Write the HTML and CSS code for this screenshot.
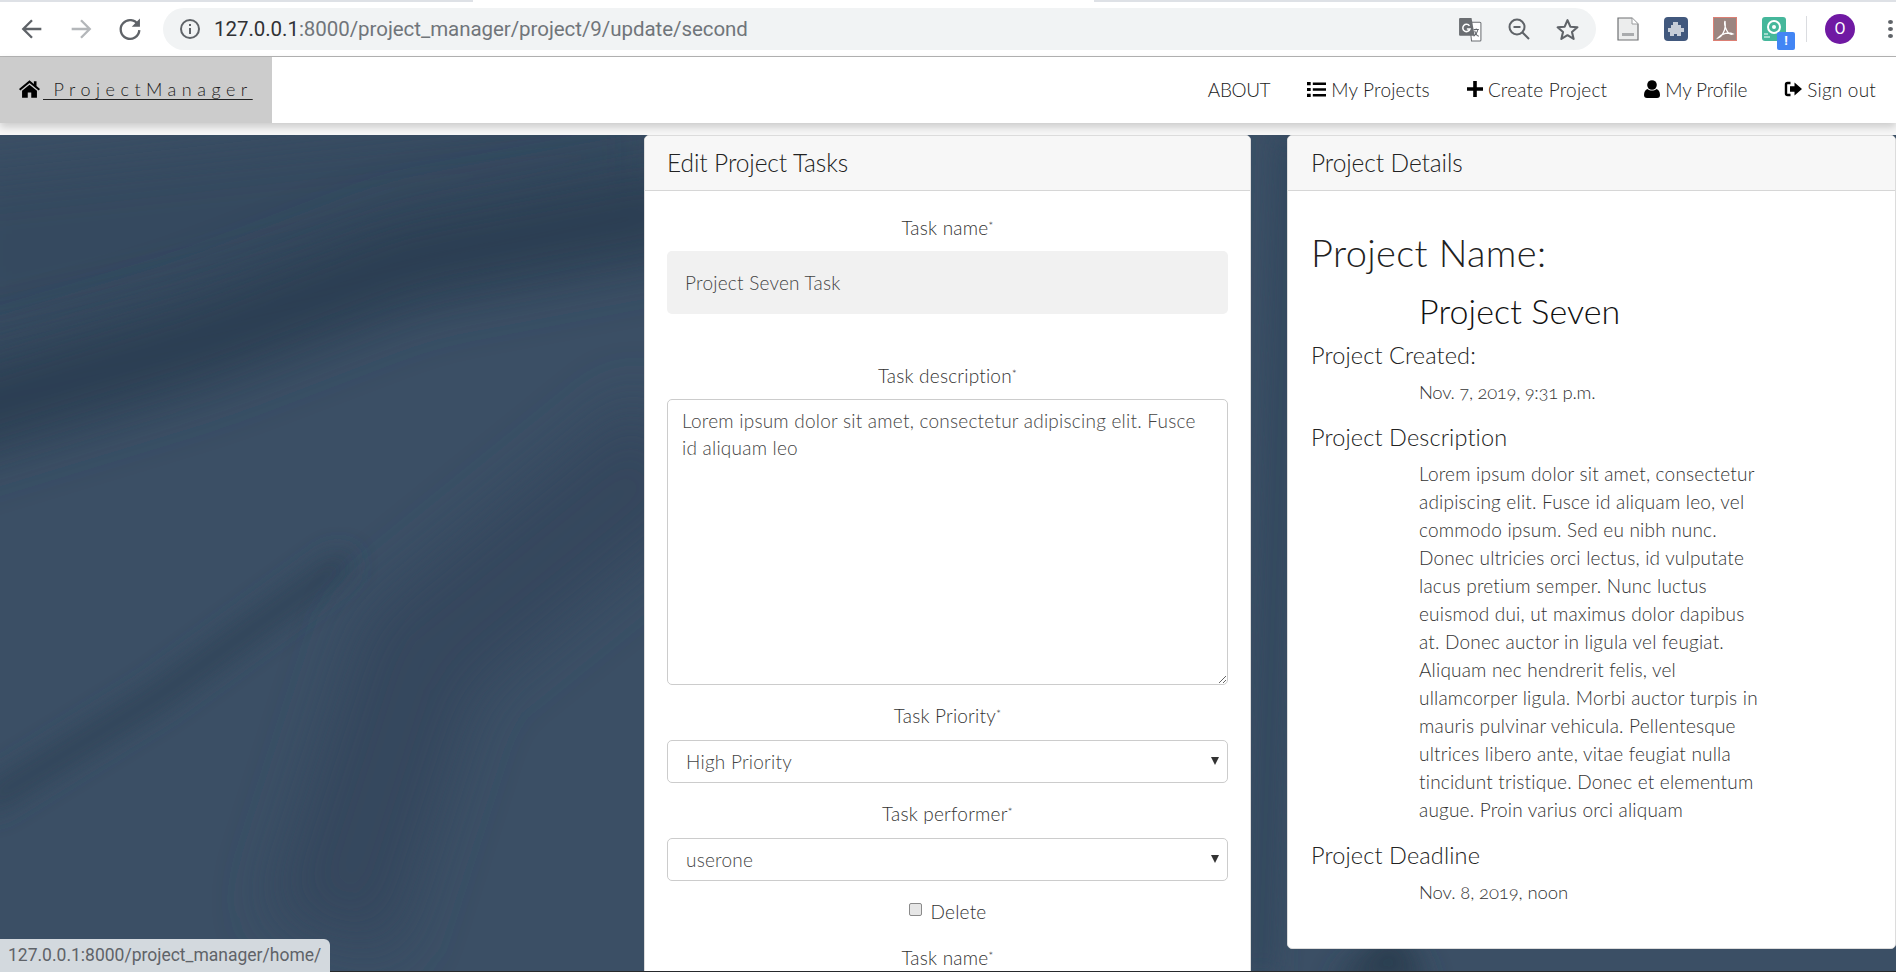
FILE: index.html
```html
<!DOCTYPE html>
<html lang="en">
<head>
<meta charset="utf-8">
<title>ProjectManager</title>
<link rel="stylesheet" href="styles.css">
</head>
<body>
<div class="tabstrip"><span class="tabstrip-open"></span></div>
<header class="chrome">
  <svg class="ci back" viewBox="0 0 24 24" width="28" height="28"><path d="M20 12H5M12 4.500 4.500 12 12 19.500" fill="none" stroke="#5f6368" stroke-width="2"/></svg>
  <svg class="ci fwd" viewBox="0 0 24 24" width="28" height="28"><path d="M4 12h15M12 4.500 19.500 12 12 19.500" fill="none" stroke="#b4b7ba" stroke-width="2"/></svg>
  <svg class="ci reload" viewBox="0 0 24 24" width="28" height="28"><path d="M19 8.500A8 8 0 1 0 20 13" fill="none" stroke="#5f6368" stroke-width="2"/><path d="M20.500 3v7h-7z" fill="#5f6368"/></svg>
  <div class="omnibox">
    <svg viewBox="0 0 24 24" width="24" height="24"><circle cx="12" cy="12" r="9" fill="none" stroke="#5f6368" stroke-width="2"/><path d="M12 11v6M12 7v2" stroke="#5f6368" stroke-width="2"/></svg>
    <span class="url"><span class="url-host">127.0.0.1</span>:8000/project_manager/project/9/update/second</span>
    <span class="omni-tools">
      <svg viewBox="0 0 24 24" width="25" height="25"><path d="M11 5h10a1 1 0 0 1 1 1v16a1 1 0 0 1-1 1h-8l-2-18z" fill="#fff" stroke="#6b6e72"/><path d="M2 1h11l3 17H2a1 1 0 0 1-1-1V2a1 1 0 0 1 1-1z" fill="#6b6e72"/><path d="M11 8.500a3.500 3.500 0 1 0 .5 3H8.500" fill="none" stroke="#fff" stroke-width="1.500"/><path d="M15 12h5M17.500 11v1.500M19 12.500c-.7 3-2.500 5-4 6M16 13c.7 3 2.500 5 4 5.500" fill="none" stroke="#5f6368"/></svg>
      <svg viewBox="0 0 24 24" width="24" height="24"><circle cx="10" cy="10" r="7.500" fill="none" stroke="#5f6368" stroke-width="2"/><path d="M15.500 15.500 22 22M6.500 10h7" stroke="#5f6368" stroke-width="2"/></svg>
      <svg viewBox="0 0 24 24" width="25" height="25"><path d="m12 3 2.700 6.300 6.800.6-5.200 4.500 1.600 6.700L12 17.500l-5.900 3.600 1.600-6.700L2.500 9.900l6.800-.6z" fill="none" stroke="#5f6368" stroke-width="2" stroke-linejoin="round"/></svg>
    </span>
  </div>
  <div class="extensions">
    <svg viewBox="0 0 22 24" width="22" height="24"><path d="M1 1h14l6 6v16H1z" fill="#eceded" stroke="#6f7173" stroke-width="1.200"/><path d="M15 1v6h6" fill="#fff" stroke="#9a9c9e"/><rect x="5" y="16" width="12" height="3" fill="#a9abad"/></svg>
    <svg viewBox="0 0 24 24" width="24" height="24"><rect width="24" height="24" rx="4" fill="#41587d"/><path d="M9 5h5v3h3v3h3v4h-3v4h-4v-2h-3v2H6v-4H4v-4h3V8h2z" fill="#c6cdd8"/></svg>
    <svg viewBox="0 0 24 24" width="24" height="24"><rect x=".5" y=".5" width="23" height="23" fill="#9b8580" stroke="#dc7f74"/><path d="M12 4c-1 3 0 6 1.500 9S17 18 20 17c-4-2-11-1-15 4 3-1 5-4 6.500-8 .7-2 1-6 .5-9z" fill="none" stroke="#fff" stroke-width="1.300"/></svg>
    <span class="ext-badge-wrap">
      <svg viewBox="0 0 24 24" width="24" height="24"><rect width="24" height="24" rx="3" fill="#45b79b"/><circle cx="12" cy="10" r="6" fill="none" stroke="#fff" stroke-width="2"/><circle cx="12" cy="10" r="2" fill="#fff"/><path d="M2 20h6M2 17h4" stroke="#fff"/></svg>
      <span class="ext-badge">!</span>
    </span>
    <span class="sep"></span>
    <span class="avatar">O</span>
    <span class="dots"><i></i><i></i><i></i></span>
  </div>
</header>

<nav class="navbar">
  <a class="brand">
    <svg class="brand-icon" viewBox="0 0 24 20" width="21" height="18"><path d="M12 0 0 10l1.500 1.800L12 3.200l10.500 8.600L24 10l-4-3.300V1h-3v3.200z" fill="#000"/><path d="M12 5 3.500 12v8H10v-6h4v6h6.500v-8z" fill="#000"/></svg><span class="brand-text"> ProjectManager</span>
  </a>
  <ul class="nav-links">
    <li class="nav-about">ABOUT</li>
    <li><svg viewBox="0 0 18 16" width="19" height="17"><path d="M0 1h3.500v3H0zM0 6.500h3.500v3H0zM0 12h3.500v3H0zM5.500 1.300H18v2.400H5.500zM5.500 6.800H18v2.400H5.500zM5.500 12.300H18v2.400H5.500z" fill="#000"/></svg>My Projects</li>
    <li><svg viewBox="0 0 16 16" width="16" height="16"><path d="M6.200 0h3.600v6.200H16v3.600H9.800V16H6.200V9.800H0V6.200h6.200z" fill="#000"/></svg>Create Project</li>
    <li class="nav-profile"><svg viewBox="0 0 16 18" width="16" height="18"><circle cx="8" cy="5" r="4.800" fill="#000"/><path d="M3.500 9c2.500 2 6.500 2 9 0 2 .7 3.500 2.700 3.500 6 0 2-1 3-3 3H3c-2 0-3-1-3-3 0-3.300 1.500-5.300 3.500-6z" fill="#000"/></svg>My Profile</li>
    <li><svg viewBox="0 0 18 16" width="18" height="16"><path d="M6.500 2H3.500C2.500 2 2 2.500 2 3.500v9c0 1 .5 1.500 1.500 1.500h3" fill="none" stroke="#000" stroke-width="2.400"/><path d="M10.500 1.500 18 8l-7.500 6.500V10.700H6V5.300h4.500z" fill="#000"/></svg>Sign out</li>
  </ul>
</nav>
<div class="nav-gap"></div>

<main class="page">
  <svg class="backdrop" viewBox="0 0 1896 837" width="1896" height="837" aria-hidden="true">
    <defs>
      <filter id="soft" filterUnits="userSpaceOnUse" x="-300" y="-300" width="2500" height="1500"><feGaussianBlur stdDeviation="30"/></filter>
      <filter id="softer" filterUnits="userSpaceOnUse" x="-300" y="-300" width="2500" height="1500"><feGaussianBlur stdDeviation="14"/></filter>
    </defs>
    <path d="M-60 40 L660 -40 L660 60 L-60 220z" fill="#35495e" filter="url(#soft)"/>
    <path d="M-80 290 L200 205 L410 125 L700 70" fill="none" stroke="#293d51" stroke-width="85" filter="url(#soft)"/>
    <path d="M-10 665 L160 560 L340 430" fill="none" stroke="#2f4357" stroke-width="22" stroke-linecap="round" filter="url(#softer)"/>
    <path d="M330 800 L420 520 L680 310" fill="none" stroke="#34475d" stroke-width="130" filter="url(#soft)"/>
    <path d="M1330 850 L1395 790 L1430 850z" fill="#2a3e50" filter="url(#softer)"/>
    <path d="M1290 0 L1260 840" fill="none" stroke="#33475d" stroke-width="26" filter="url(#softer)"/>
  </svg>
  <section class="card card-tasks">
    <h4 class="card-header">Edit Project Tasks</h4>
    <form class="card-body form">
      <div class="field field-wide">
        <label class="label-tight">Task name<sup>*</sup></label>
        <input class="text-input" type="text" value="Project Seven Task" readonly>
      </div>
      <div class="field">
        <label class="label-tight">Task description<sup>*</sup></label>
        <textarea class="textarea" readonly>Lorem ipsum dolor sit amet, consectetur adipiscing elit. Fusce
id aliquam leo</textarea>
      </div>
      <div class="field">
        <label>Task Priority<sup>*</sup></label>
        <div class="select-wrap"><select class="select"><option>High Priority</option></select></div>
      </div>
      <div class="field">
        <label>Task performer<sup>*</sup></label>
        <div class="select-wrap"><select class="select"><option>userone</option></select></div>
      </div>
      <div class="field field-check">
        <input class="check" type="checkbox" id="del"><label for="del">Delete</label>
      </div>
      <div class="field">
        <label>Task name<sup>*</sup></label>
      </div>
    </form>
  </section>

  <section class="card card-details">
    <h4 class="card-header">Project Details</h4>
    <div class="card-body details">
      <h2 class="d-title">Project Name:</h2>
      <h3 class="d-value-lg">Project Seven</h3>
      <h5 class="d-head">Project Created:</h5>
      <p class="d-text d-date d-date-long">Nov. 7, 2019, 9:31 p.m.</p>
      <h5 class="d-head">Project Description</h5>
      <p class="d-text">Lorem ipsum dolor sit amet, consectetur<br>adipiscing elit. Fusce id aliquam leo, vel<br>commodo ipsum. Sed eu nibh nunc.<br>Donec ultricies orci lectus, id vulputate<br>lacus pretium semper. Nunc luctus<br>euismod dui, ut maximus dolor dapibus<br>at. Donec auctor in ligula vel feugiat.<br>Aliquam nec hendrerit felis, vel<br>ullamcorper ligula. Morbi auctor turpis in<br>mauris pulvinar vehicula. Pellentesque<br>ultrices libero ante, vitae feugiat nulla<br>tincidunt tristique. Donec et elementum<br>augue. Proin varius orci aliquam</p>
      <h5 class="d-head">Project Deadline</h5>
      <p class="d-text d-date">Nov. 8, 2019, noon</p>
    </div>
  </section>
</main>
<div class="status">127.0.0.1:8000/project_manager/home/</div>
</body>
</html>
```
FILE: styles.css
```css
* { box-sizing: border-box; }
html, body { margin: 0; padding: 0; height: 972px; overflow: hidden; background: #fff; }
body { display: flex; flex-direction: column; font-family: "Lato", "Liberation Sans", sans-serif; font-weight: 300; color: #212529; }

.tabstrip { height: 2px; background: #dee1e6; flex: none; padding-left: 473px; }
.tabstrip-open { display: block; width: 621px; height: 2px; background: #fff; }

.chrome { flex: none; height: 55px; display: flex; align-items: center; padding-left: 18px; border-bottom: 1px solid #b4b4b4; background: #fff; }
.ci { flex: none; margin-right: 21px; }
.reload { margin-right: 19px; }
.omnibox { flex: none; width: 1433px; height: 42px; background: #f1f3f4; border-radius: 21px; display: flex; align-items: center; padding: 0 16px 0 15px; }
.url { margin-left: 12px; font: 400 20.500px "Roboto", "Liberation Sans", sans-serif; color: #70757a; letter-spacing: -.05px; white-space: nowrap; }
.url-host { color: #303134; }
.omni-tools { margin-left: auto; display: flex; align-items: center; gap: 24px; }
.extensions { flex: 1; display: flex; align-items: center; padding-left: 21px; }
.extensions > svg { margin-right: 25px; flex: none; }
.ext-badge-wrap { position: relative; display: block; height: 24px; width: 24px; }
.ext-badge { position: absolute; left: 15px; top: 15px; width: 18px; height: 18px; background: #4285f4; border-radius: 2px; color: #fff; font: 700 13px/18px "Roboto", sans-serif; text-align: center; }
.sep { width: 1px; height: 26px; background: #dadce0; margin-left: 20px; }
.avatar { width: 30px; height: 30px; margin-left: 18px; border-radius: 50%; background: #7019a3; color: #fff; font: 400 16px/30px "Roboto", sans-serif; text-align: center; }
.dots { display: flex; flex-direction: column; gap: 3px; margin-left: 33px; }
.dots i { display: block; width: 5px; height: 4px; border-radius: 50%; background: #5f6368; }

.navbar { flex: none; height: 66px; display: flex; justify-content: space-between; align-items: stretch; background: #fff; box-shadow: 0 4px 8px rgba(0,0,0,.18); position: relative; z-index: 1; }
.brand { width: 272px; background: #ccc; display: flex; align-items: center; padding: 0 0 2px 19px; color: #000; }
.brand-icon { margin-right: 3px; }
.brand-text { white-space: pre; font-size: 18px; letter-spacing: 5.500px; text-decoration: underline; text-underline-offset: 3px; color: #222; }
.nav-links { list-style: none; margin: 0; padding: 0 20px 2px 0; display: flex; align-items: center; gap: 37px; font-size: 19px; color: #222; }
.nav-links li { display: flex; align-items: center; gap: 5px; letter-spacing: .2px; white-space: nowrap; }
.nav-links .nav-about { letter-spacing: -.4px; }
.nav-links .nav-profile { letter-spacing: -.15px; }
.nav-gap { flex: none; height: 12px; background: #f7f7f7; }

.page { flex: 1; min-height: 0; overflow: hidden; position: relative; display: grid; grid-template-columns: 607px 609px; column-gap: 36px; align-items: start; padding-left: 644px; border-bottom: 1px solid #26292c; background: #3b4f65; }
.backdrop { position: absolute; left: 0; top: 0; }
.card { position: relative; background: #fff; border-radius: 5px; border: 1px solid #dcdcdc; }
.card-header { margin: 0; height: 55px; padding: 0 22px; font-size: 24.500px; font-weight: 300; line-height: 53px; background: #f7f7f7; border-bottom: 1px solid #d6d6d6; letter-spacing: -.1px; border-radius: 5px 5px 0 0; color: #222; }
.card-details .card-header { padding: 0 23px; }
.card-tasks { height: 860px; }
.form { padding: 23px 22px 0; }
.field { margin-bottom: 17px; text-align: center; }
.field-wide { margin-bottom: 48px; }
.field label { display: block; font-size: 19px; line-height: 27px; margin-bottom: 11px; letter-spacing: .2px; color: #333; }
.field .label-tight { margin-bottom: 10px; }
.field sup { font-size: 12px; line-height: 0; vertical-align: 5px; }
.text-input { display: block; width: 100%; height: 63px; border: 0; border-radius: 5px; background: #f1f1f1; padding: 0 18px; font: 300 19px "Lato", sans-serif; letter-spacing: .23px; color: #444; outline: none; }
.textarea { display: block; width: 100%; height: 286px; border: 1px solid #ccc; border-radius: 5px; padding: 7px 14px; font: 300 19px/27px "Lato", sans-serif; letter-spacing: .23px; color: #444; background: #fff; outline: none; }
.select-wrap { position: relative; }
.select-wrap::after { content: ""; position: absolute; right: 9px; top: 17px; border: 4px solid transparent; border-width: 8px 4px 0; border-top-color: #333; }
.select { display: block; width: 100%; height: 43px; appearance: none; -webkit-appearance: none; border: 1px solid #ccc; border-radius: 5px; background: #fff; padding: 0 18px; font: 300 19px "Lato", sans-serif; letter-spacing: .23px; color: #444; outline: none; }
.field-check { display: flex; justify-content: center; align-items: center; gap: 9px; margin-bottom: 19px; height: 27px; }
.field-check label { margin: 0; }
.check { appearance: none; -webkit-appearance: none; margin: 0 0 4px; width: 13px; height: 13px; border: 1px solid #8a8a8a; border-radius: 2px; background: #e6e6e6; }

.details { padding: 40px 23px 42px; }
.d-title { margin: 0 0 18px; font-size: 38px; line-height: 43px; font-weight: 300; letter-spacing: .38px; color: #222; }
.d-value-lg { margin: 0 0 12px 108px; font-size: 34px; line-height: 38px; font-weight: 300; letter-spacing: .1px; color: #111; }
.d-head { margin: 0 0 10px; font-size: 23.500px; line-height: 26px; font-weight: 300; letter-spacing: .13px; color: #222; }
.d-text { margin: 0 0 18px 108px; font-size: 19px; line-height: 28px; letter-spacing: .2px; color: #333; white-space: nowrap; }
.d-date { font-size: 18.500px; font-variant-numeric: oldstyle-nums; letter-spacing: -.1px; }
.d-date-long { letter-spacing: -.3px; }
.d-text:last-child { margin-bottom: 0; }

.status { position: absolute; left: 0; bottom: 0; width: 330px; height: 33px; background: #d3d9de; border-radius: 0 6px 0 0; padding-left: 8px; font: 400 17.500px/32px "Roboto", "Liberation Sans", sans-serif; color: #5f6368; white-space: nowrap; z-index: 2; }
```
